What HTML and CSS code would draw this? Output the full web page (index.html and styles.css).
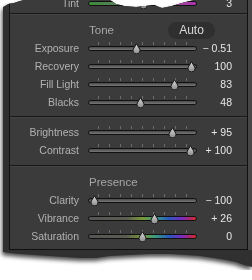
FILE: index.html
```html
<!DOCTYPE html>
<html lang="en">
<head>
    <meta charset="UTF-8">
    <meta name="viewport" content="width=device-width, initial-scale=1.0">
    <title>Basic - Tone</title>
    <link rel="stylesheet" href="styles.css">
</head>
<body>
    <svg class="defs" width="0" height="0">
        <defs>
            <linearGradient id="thumbFill" x1="0" y1="0" x2="0" y2="1">
                <stop offset="0" stop-color="#dcdcdc"/>
                <stop offset="1" stop-color="#8a8a8a"/>
            </linearGradient>
        </defs>
    </svg>
    <div class="paper">
        <div class="sheet">
            <div class="panel">
                <div class="sec sec-prev">
                    <div class="row row-tint">
                        <span class="lbl">Tint</span>
                        <div class="slider"><div class="groove groove-tint"></div>
                            <svg class="thumb" style="left:50.5px" viewBox="0 0 9 11"><path d="M4.5 0.8 L7.7 6 A3.5 3.5 0 1 1 1.3 6 Z"/></svg></div>
                        <span class="val">3</span>
                    </div>
                </div>

                <div class="sec sec-tone">
                    <div class="head">
                        <span class="title">Tone</span>
                        <span class="auto">Auto</span>
                    </div>
                    <div class="row">
                        <span class="lbl">Exposure</span>
                        <div class="slider"><div class="groove"></div>
                            <svg class="thumb" style="left:43.5px" viewBox="0 0 9 11"><path d="M4.5 0.8 L7.7 6 A3.5 3.5 0 1 1 1.3 6 Z"/></svg></div>
                        <span class="val">− 0.51</span>
                    </div>
                    <div class="row">
                        <span class="lbl">Recovery</span>
                        <div class="slider"><div class="groove"></div>
                            <svg class="thumb" style="left:98.5px" viewBox="0 0 9 11"><path d="M4.5 0.8 L7.7 6 A3.5 3.5 0 1 1 1.3 6 Z"/></svg></div>
                        <span class="val">100</span>
                    </div>
                    <div class="row">
                        <span class="lbl">Fill Light</span>
                        <div class="slider"><div class="groove"></div>
                            <svg class="thumb" style="left:81.5px" viewBox="0 0 9 11"><path d="M4.5 0.8 L7.7 6 A3.5 3.5 0 1 1 1.3 6 Z"/></svg></div>
                        <span class="val">83</span>
                    </div>
                    <div class="row">
                        <span class="lbl">Blacks</span>
                        <div class="slider"><div class="groove"></div>
                            <svg class="thumb" style="left:48px" viewBox="0 0 9 11"><path d="M4.5 0.8 L7.7 6 A3.5 3.5 0 1 1 1.3 6 Z"/></svg></div>
                        <span class="val">48</span>
                    </div>
                </div>

                <div class="sec sec-bc">
                    <div class="row">
                        <span class="lbl">Brightness</span>
                        <div class="slider"><div class="groove"></div>
                            <svg class="thumb" style="left:79.5px" viewBox="0 0 9 11"><path d="M4.5 0.8 L7.7 6 A3.5 3.5 0 1 1 1.3 6 Z"/></svg></div>
                        <span class="val">+ 95</span>
                    </div>
                    <div class="row">
                        <span class="lbl">Contrast</span>
                        <div class="slider"><div class="groove"></div>
                            <svg class="thumb" style="left:97.5px" viewBox="0 0 9 11"><path d="M4.5 0.8 L7.7 6 A3.5 3.5 0 1 1 1.3 6 Z"/></svg></div>
                        <span class="val">+ 100</span>
                    </div>
                </div>

                <div class="sec sec-presence">
                    <div class="head">
                        <span class="title">Presence</span>
                    </div>
                    <div class="row">
                        <span class="lbl">Clarity</span>
                        <div class="slider"><div class="groove"></div>
                            <svg class="thumb" style="left:1.5px" viewBox="0 0 9 11"><path d="M4.5 0.8 L7.7 6 A3.5 3.5 0 1 1 1.3 6 Z"/></svg></div>
                        <span class="val">− 100</span>
                    </div>
                    <div class="row">
                        <span class="lbl">Vibrance</span>
                        <div class="slider"><div class="groove groove-color"></div>
                            <svg class="thumb" style="left:61.5px" viewBox="0 0 9 11"><path d="M4.5 0.8 L7.7 6 A3.5 3.5 0 1 1 1.3 6 Z"/></svg></div>
                        <span class="val">+ 26</span>
                    </div>
                    <div class="row">
                        <span class="lbl">Saturation</span>
                        <div class="slider"><div class="groove groove-color"></div>
                            <svg class="thumb" style="left:50px" viewBox="0 0 9 11"><path d="M4.5 0.8 L7.7 6 A3.5 3.5 0 1 1 1.3 6 Z"/></svg></div>
                        <span class="val">0</span>
                    </div>
                </div>
            </div>
        </div>
    </div>
</body>
</html>
```

FILE: styles.css
```css
body {
    margin: 0;
    background-color: #fff;
    font-family: "Liberation Sans", Arial, sans-serif;
    overflow: hidden;
}
.defs {
    position: absolute;
}
.paper {
    filter: drop-shadow(-1px 3px 2px rgba(0, 0, 0, 0.7));
}
.sheet {
    margin-left: 3px;
    width: 249px;
    padding-bottom: 20px;
    background: linear-gradient(to right, transparent 245px, #474747 245px) 0 0 / 100% 256px no-repeat, #303030;
    clip-path: polygon(0 13px, 5px 10px, 11px 9px, 17px 7px, 25px 5px, 37px 4px, 49px 3px, 55px 1px, 59px 0,
        97px 0, 101px 2px, 107px 6px, 113px 10px, 121px 12px, 133px 13px, 143px 12px, 151px 11px, 159px 14px,
        169px 12px, 179px 9px, 191px 6px, 203px 4px, 213px 2px, 219px 0, 249px 0,
        249px 273px, 241px 271px, 233px 268px, 223px 266px, 211px 264px, 197px 262px, 183px 261px,
        167px 260px, 147px 260px, 127px 261px, 107px 262px, 93px 264px, 77px 264px, 61px 263px,
        45px 262px, 31px 261px, 17px 260px, 7px 259px, 0 258px);
}
.panel {
    margin-left: 6px;
    width: 239px;
    box-sizing: border-box;
    background-color: #3b3b3b;
    border: 1px solid #101010;
    border-top: none;
}
.sec {
    border-bottom: 1px solid #181818;
    box-shadow: 0 1px 0 #444;
}
.sec-prev {
    height: 19px;
}
.sec-tone {
    padding-bottom: 5px;
}
.sec-bc {
    padding: 6px 0;
}
.sec-presence {
    padding-bottom: 4px;
    border-bottom: none;
    box-shadow: none;
}
.row-tint {
    margin-top: -6px;
}
.head {
    display: flex;
    align-items: center;
    justify-content: space-between;
    height: 18px;
    margin-top: 7px;
    padding: 0 32px 0 79px;
}
.title {
    font-size: 11.5px;
    color: #a6a6a6;
}
.auto {
    width: 47px;
    height: 17px;
    border-radius: 9px;
    background-color: #2f2f2f;
    color: #d8d8d8;
    font-size: 12px;
    line-height: 17px;
    text-align: center;
}
.row {
    display: flex;
    height: 18px;
}
.lbl {
    width: 69px;
    flex: none;
    text-align: right;
    font-size: 10.5px;
    line-height: 18px;
    color: #b2b2b2;
}
.val {
    flex: 1;
    padding-right: 15px;
    text-align: right;
    font-size: 10.5px;
    line-height: 18px;
    color: #e6e6e6;
}
.slider {
    position: relative;
    flex: none;
    width: 109px;
    margin-left: 9px;
}
.slider::before {
    content: '';
    position: absolute;
    left: 0;
    right: 0;
    top: 3px;
    height: 3px;
    background: repeating-linear-gradient(to right, transparent 0 10px, #6c6c6c 10px 11px);
}
.groove {
    margin-top: 7px;
    height: 5px;
    box-sizing: border-box;
    border: 1px solid #111;
    border-radius: 3px;
    background: linear-gradient(#4a4a4a, #777);
}
.groove-tint {
    background: linear-gradient(to right, #3a8a3a, #777 50%, #b030b0);
}
.groove-color {
    background: linear-gradient(to right, #555 0%, #5c5c52 35%, #7a9838 50%, #3a9a80 62%, #2a58c0 75%, #7a2ac0 87%, #d42828 100%);
}
.thumb {
    position: absolute;
    top: 4px;
    width: 9px;
    height: 11px;
}
.thumb path {
    fill: url(#thumbFill);
    stroke: #161616;
    stroke-width: 1;
}
```
